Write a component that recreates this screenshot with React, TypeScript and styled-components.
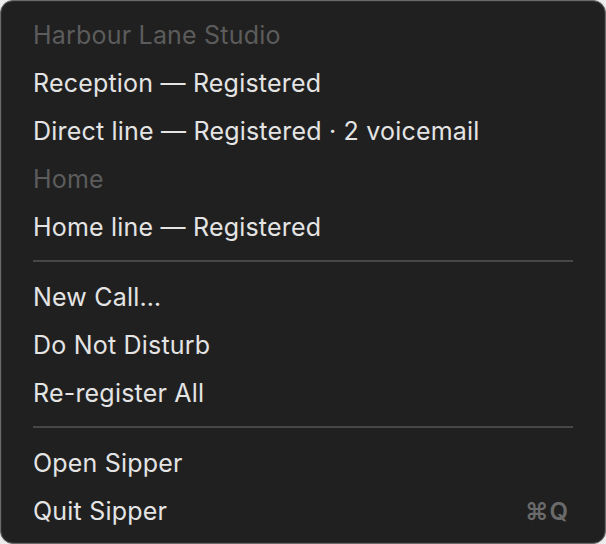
import styled, { createGlobalStyle } from 'styled-components'

const GlobalStyle = createGlobalStyle`
	html, body {
		margin: 0;
		padding: 0;
		background: #ececec;
	}
	#root {
		width: 606px;
		height: 544px;
	}
`

type Entry =
	| { kind: 'header'; label: string }
	| { kind: 'item'; label: string; shortcut?: string }
	| { kind: 'separator' }

const ENTRIES: Entry[] = [
	{ kind: 'header', label: 'Harbour Lane Studio' },
	{ kind: 'item', label: 'Reception — Registered' },
	{ kind: 'item', label: 'Direct line — Registered · 2 voicemail' },
	{ kind: 'header', label: 'Home' },
	{ kind: 'item', label: 'Home line — Registered' },
	{ kind: 'separator' },
	{ kind: 'item', label: 'New Call…' },
	{ kind: 'item', label: 'Do Not Disturb' },
	{ kind: 'item', label: 'Re-register All' },
	{ kind: 'separator' },
	{ kind: 'item', label: 'Open Sipper' },
	{ kind: 'item', label: 'Quit Sipper', shortcut: '⌘Q' },
]

const App = () => {
	return (
		<>
			<GlobalStyle />
			<Menu>
				{ENTRIES.map((entry, i) => {
					if (entry.kind === 'separator') return <Separator key={i} />
					return (
						<Row key={i} $muted={entry.kind === 'header'}>
							<Label>{entry.label}</Label>
							{entry.kind === 'item' && entry.shortcut && <Shortcut>{entry.shortcut}</Shortcut>}
						</Row>
					)
				})}
			</Menu>
		</>
	)
}

const Menu = styled.div`
	box-sizing: border-box;
	width: 606px;
	height: 544px;
	padding: 10px 0 8px;
	display: flex;
	flex-direction: column;
	background: #202020;
	border: 1px solid #6a6a6a;
	border-radius: 13px;
	box-shadow: inset 0 0 0 1px #2c2c2c;
	font-family: Inter, 'Noto Sans', sans-serif;
	-webkit-font-smoothing: antialiased;
`

const Row = styled.div<{ $muted: boolean }>`
	height: 48px;
	flex: none;
	display: flex;
	align-items: center;
	justify-content: space-between;
	padding: 0 36px 0 32px;
	font-size: 25px;
	letter-spacing: 0.2px;
	color: ${({ $muted }) => ($muted ? '#5c5c5c' : '#e4e4e4')};
`

const Label = styled.span`
	white-space: nowrap;
`

const Shortcut = styled.span`
	color: #6b6b6b;
	font-weight: 600;
	font-size: 24px;
	letter-spacing: 1px;
`

const Separator = styled.div`
	flex: none;
	height: 2px;
	margin: 9px 32px 11px;
	background: #474747;
`

export default App
